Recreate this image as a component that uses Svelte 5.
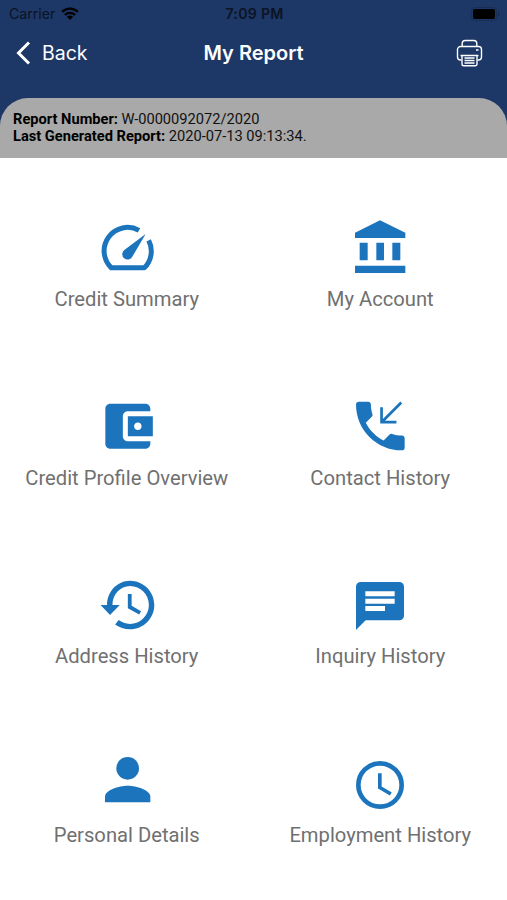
<script lang="ts">
	const tiles = [
		{ icon: 'gauge', label: 'Credit Summary' },
		{ icon: 'bank', label: 'My Account' },
		{ icon: 'wallet', label: 'Credit Profile Overview' },
		{ icon: 'phone', label: 'Contact History' },
		{ icon: 'history', label: 'Address History' },
		{ icon: 'chat', label: 'Inquiry History' },
		{ icon: 'person', label: 'Personal Details' },
		{ icon: 'clock', label: 'Employment History' }
	];
</script>

<div class="screen">
	<header>
		<div class="status">
			<div class="carrier">
				<span>Carrier</span>
				<svg class="wifi" viewBox="0 0 18 13">
					<path d="M1.2 4.9a11 11 0 0 1 15.6 0M4 8a7 7 0 0 1 10 0" fill="none" stroke="currentColor" stroke-width="2.4" />
					<path d="M9 13 5.9 9.8a4.4 4.4 0 0 1 6.2 0z" fill="currentColor" />
				</svg>
			</div>
			<span class="time">7:09 PM</span>
			<div class="battery">
				<svg viewBox="0 0 29 14">
					<rect x=".5" y=".5" width="25" height="13" rx="3.5" fill="none" stroke="#182e57" />
					<rect x="2" y="2" width="22" height="10" rx="2" fill="#000" />
					<path d="M27 5c2 .8 2 3.2 0 4z" fill="#152a50" />
				</svg>
			</div>
		</div>
		<nav>
			<button class="back">
				<svg viewBox="0 0 14 24"><path d="M12.5 1.5 2 12l10.500 10.500" fill="none" stroke="currentColor" stroke-width="3" /></svg>
				<span>Back</span>
			</button>
			<h1>My Report</h1>
			<button class="print" aria-label="Print">
				<svg viewBox="0 0 27 28" fill="none" stroke="currentColor" stroke-width="1.4">
					<path d="M6.2 7.500V4.500A3 3 0 0 1 9.200 1.500h8.600a3 3 0 0 1 3 3v3" />
					<path d="M5.500 21H4.500a3 3 0 0 1-3-3v-7.500a3 3 0 0 1 3-3h18a3 3 0 0 1 3 3V18a3 3 0 0 1-3 3h-1" />
					<path d="M4.500 16.500h18M6 16.500v8.500a1.800 1.800 0 0 0 1.800 1.800h11.400A1.800 1.800 0 0 0 21 25v-8.500M8.500 19h10M8.500 21.500h10M8.500 24h10M20 11h2.500" />
				</svg>
			</button>
		</nav>
		<div class="report">
			<p><b>Report Number:</b> W-0000092072/2020</p>
			<p><b>Last Generated Report:</b> 2020-07-13 09:13:34.</p>
		</div>
	</header>

	<main>
		{#each tiles as { icon, label }}
			<div class="tile">
				<svg viewBox="0 0 180 180" fill="currentColor">
					{#if icon === 'gauge'}
						<path class="line" stroke-width="15" stroke-linejoin="round" d="M126 37A70.500 70.500 0 0 0 43 149.500H142A70.500 70.500 0 0 0 155 67" />
						<path d="M146 48 106 116A16 16 0 1 1 82 96Z" />
					{:else if icon === 'bank'}
						<path d="M90 7l76 37v16H15V44zM29 74h24v53H29zM79 74h23v53H79zM127 74h24v53h-24zM15 143h151v22H15z" />
					{:else if icon === 'wallet'}
						<g transform="translate(2.5 .5) scale(7.5)">
							<path d="M21 18v1c0 1.100-.9 2-2 2H5c-1.110 0-2-.9-2-2V5c0-1.100.89-2 2-2h14c1.100 0 2 .9 2 2v1h-9c-1.110 0-2 .9-2 2v8c0 1.100.89 2 2 2h9zm-9-2h10V8H12v8zm4-2.500c-.83 0-1.500-.67-1.500-1.500s.67-1.500 1.500-1.500 1.500.67 1.500 1.500-.67 1.500-1.500 1.500z" />
						</g>
					{:else if icon === 'phone'}
						<g transform="translate(-6.3 -7.3) scale(8.11)">
							<path d="M6.620 10.790c1.440 2.830 3.760 5.140 6.590 6.590l2.200-2.200c.27-.27.67-.36 1.020-.24 1.120.37 2.330.57 3.570.57.55 0 1 .45 1 1V20c0 .55-.45 1-1 1-9.390 0-17-7.610-17-17 0-.55.45-1 1-1h3.500c.55 0 1 .45 1 1 0 1.250.2 2.450.57 3.570.11.35.03.74-.25 1.020l-2.200 2.200z" />
							<path class="line" stroke-width="1" d="M12.450 5.100v5.500h5.500M12.450 10.600l7.300-7.300" />
						</g>
					{:else if icon === 'history'}
						<g transform="translate(-6.3 -7.2) scale(8.1)">
							<path d="M13 3c-4.700 0-8.500 4.030-8.500 9H2.100l3.500 3.700L9.200 12H6.500c0-3.870 2.900-7 6.500-7 3.870 0 7 3.130 7 7s-3.130 7-7 7c-1.700 0-3-.5-4.200-1.400l-1.300 1.600C9.100 20.300 10.900 21 13 21c4.970 0 9-4.030 9-9s-4.030-9-9-9z" />
							<path d="M12.200 7.900v5.300l4.200 2.300.7-1.200-3.500-2V7.900z" />
						</g>
					{:else if icon === 'chat'}
						<path fill-rule="evenodd" d="M32 21h116a14 14 0 0 1 14 14v87a14 14 0 0 1-14 14H47l-29 29V35a14 14 0 0 1 14-14zM46 49v15h88V49zM46 71v15h88V71zM46 93v15h59V93z" />
					{:else if icon === 'person'}
						<circle cx="92" cy="43" r="34" />
						<path d="M24 145v-17c0-20 42-33 68-33s68 13 68 33v17z" />
					{:else}
						<circle class="line" cx="90" cy="93" r="65" stroke-width="14" />
						<path class="line" stroke-width="11" d="M89.500 58v42.500l33 19.500" />
					{/if}
				</svg>
				<span>{label}</span>
			</div>
		{/each}
	</main>
</div>

<style>
	:global(body) {
		margin: 0;
		background: #fff;
	}

	.screen {
		width: 507px;
		height: 900px;
		overflow: hidden;
		font-family: Roboto, sans-serif;
	}

	header {
		height: 158px;
		display: flex;
		flex-direction: column;
		background: #1d3766;
	}

	.status,
	nav {
		display: grid;
		grid-template-columns: 1fr auto 1fr;
		align-items: center;
		font-family: Inter, sans-serif;
	}

	.status {
		height: 27px;
		padding: 0 7px 0 9px;
		font-size: 14.1px;
		color: #0b1424;
	}

	.carrier {
		display: flex;
		align-items: center;
		gap: 6px;
	}

	.wifi {
		width: 18px;
		height: 13px;
		color: #000;
	}

	.time {
		font-weight: 600;
		letter-spacing: 0.3px;
	}

	.battery {
		display: flex;
		justify-content: flex-end;
	}

	.battery svg {
		width: 29px;
		height: 14px;
	}

	nav {
		height: 51px;
		padding: 0 24px 0 16px;
		margin-bottom: 19.5px;
		color: #fff;
	}

	button {
		display: flex;
		align-items: center;
		padding: 0;
		border: 0;
		background: none;
		color: inherit;
		font: inherit;
	}

	.back {
		gap: 11px;
		font-size: 19.5px;
	}

	.back svg {
		width: 15px;
		height: 24px;
	}

	h1 {
		margin: 0 -4px 0 4px;
		font-size: 20px;
		font-weight: 600;
	}

	.print {
		justify-self: end;
	}

	.print svg {
		width: 27px;
		height: 28px;
	}

	.report {
		flex: 1;
		box-sizing: border-box;
		padding: 13px 13px 0;
		border-radius: 28px 28px 0 0;
		background: #a9a9a9;
		color: #111;
		font-size: 14.65px;
		line-height: 17px;
	}

	.report p {
		margin: 0;
	}

	b {
		color: #000;
	}

	main {
		display: grid;
		grid-template-columns: 1fr 1fr;
		grid-auto-rows: 178.7px;
		padding-top: 59.6px;
	}

	.tile {
		display: flex;
		flex-direction: column;
		align-items: center;
		gap: 9.4px;
		font-size: 20.2px;
		line-height: 24px;
		color: #707070;
	}

	.tile svg {
		width: 60px;
		height: 60px;
		color: #1c75bc;
	}

	.line {
		fill: none;
		stroke: currentColor;
	}
</style>
